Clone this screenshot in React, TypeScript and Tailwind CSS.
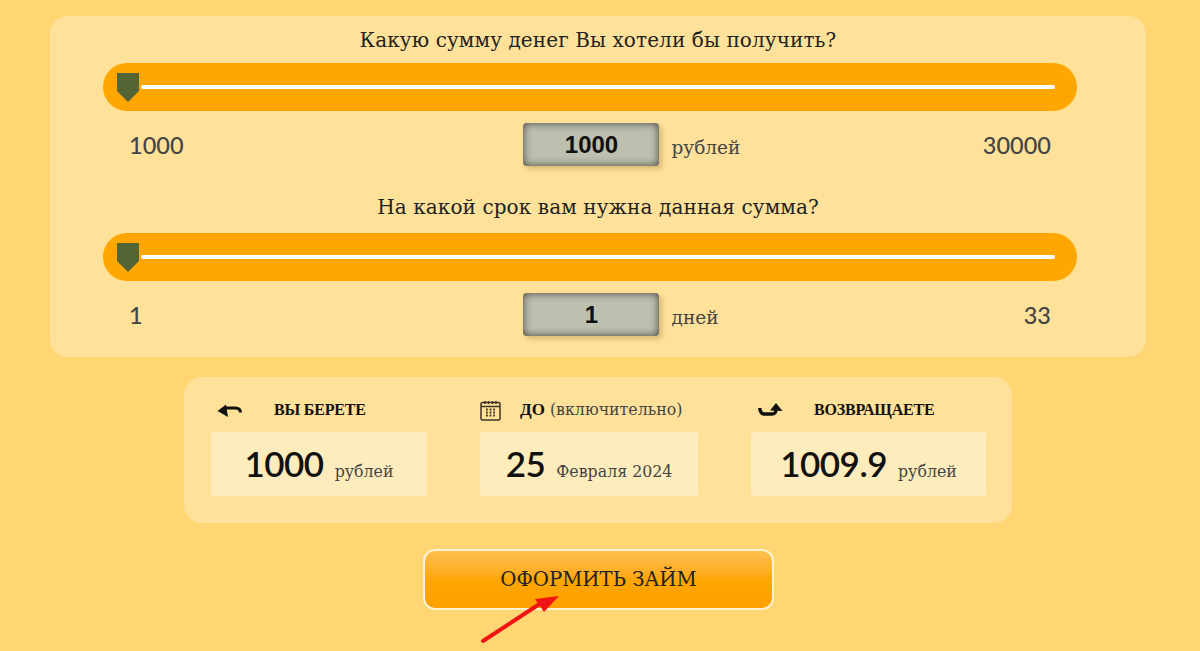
import React from "react";

const serif = "font-['DejaVu_Serif','Liberation_Serif',serif]";
const lato = "font-['Lato','Open_Sans',sans-serif]";

function Slider() {
  return (
    <div className="relative ml-[53px] mr-[69px] flex h-12 items-center rounded-3xl bg-[#ffa600] pl-[38px] pr-[22px]">
      <div className="h-1 w-full rounded-sm bg-white" />
      <svg className="absolute left-[14px] top-[10px]" width="22" height="30" viewBox="0 0 22 30">
        <path d="M0 0H22V18L11 29L0 18Z" fill="#536435" />
      </svg>
    </div>
  );
}

function ValueRow({ min, max, value, unit }: { min: string; max: string; value: string; unit: string }) {
  return (
    <div className="ml-[79px] mr-[95px] flex h-[70px] items-center">
      <span className={`${lato} flex-1 text-[23.5px] font-medium text-[#444]`}>{min}</span>
      <div className="mb-[3px] ml-[1px] flex h-[43px] w-[136px] items-center justify-center rounded-[4px] bg-[#bdbfaf] pl-[2px] font-['Liberation_Sans',sans-serif] text-[24px] font-bold text-[#111] shadow-[inset_0_0_8px_#3f3f30,3px_3px_5px_rgba(120,100,40,0.3)]">
        {value}
      </div>
      <div className="flex flex-1 items-center justify-between">
        <span className={`${serif} ml-[13px] mt-[4px] text-[18.5px] text-[#444]`}>{unit}</span>
        <span className={`${lato} text-[23.5px] font-medium text-[#444]`}>{max}</span>
      </div>
    </div>
  );
}

function Stat({ icon, label, value, unit, box }: { icon: React.ReactNode; label: React.ReactNode; value: string; unit: string; box: string }) {
  return (
    <div className={box}>
      <div className="flex h-[55px] items-center pt-[11px] text-[#111]">
        {icon}
        {label}
      </div>
      <div className="flex h-16 items-baseline justify-center rounded-[3px] bg-[#ffecbd] pt-[5px]">
        <span className={`${lato} text-[35px] font-semibold tracking-[-0.5px] text-[#111]`}>{value}</span>
        <span className={`${serif} ml-[11px] text-[15.8px] text-[#444]`}>{unit}</span>
      </div>
    </div>
  );
}

export default function App() {
  return (
    <div className={`${serif} relative h-[651px] overflow-hidden bg-[#ffd673] pt-4`}>
      <div className="ml-[50px] h-[341px] w-[1096px] rounded-[18px] bg-[#ffe19a]">
        <h2 className="flex h-[47px] items-center justify-center text-[20px] tracking-[0.1px] text-[#222]">Какую сумму денег Вы хотели бы получить?</h2>
        <Slider />
        <ValueRow min="1000" max="30000" value="1000" unit="рублей" />
        <h2 className="flex h-[52px] items-center justify-center text-[20px] tracking-[0.1px] text-[#222]">На какой срок вам нужна данная сумма?</h2>
        <Slider />
        <ValueRow min="1" max="33" value="1" unit="дней" />
      </div>

      <div className="ml-[184px] mt-5 flex h-[146px] w-[828px] rounded-[18px] bg-[#ffe19a] pl-[27px]">
        <Stat
          box="w-[216px]"
          icon={
            <svg className="ml-[6px] mr-[32px]" width="25" height="17" viewBox="0 0 25 17">
              <path d="M0.5 9L9 2.5L11 15Z" fill="#111" />
              <path d="M8 6H18C22 6 23.5 7.5 23.5 10.5" fill="none" stroke="#111" strokeWidth="3" />
            </svg>
          }
          label={<span className="font-['Liberation_Serif',serif] text-[16px] tracking-[-0.2px] font-bold">ВЫ БЕРЕТЕ</span>}
          value="1000"
          unit="рублей"
        />
        <Stat
          box="ml-[53px] w-[218px]"
          icon={
            <svg className="mr-[19px]" width="21" height="21" viewBox="0 0 21 21" fill="none" stroke="#3d3425" strokeWidth="1.5">
              <rect x="1" y="2.5" width="19" height="17.5" rx="1.5" />
              <path d="M1 6.5H20M5 1V4M8.5 1V4M12.5 1V4M16 1V4" />
              <path d="M6 9.5H7.8M9.6 9.5H11.4M13.2 9.5H15M6 12.5H7.8M9.6 12.5H11.4M13.2 12.5H15M6 15.5H7.8M9.6 15.5H11.4M13.2 15.5H15" strokeWidth="2" />
            </svg>
          }
          label={
            <span className="flex items-baseline">
              <span className="font-['Liberation_Serif',serif] text-[17px] font-bold">ДО</span>
              <span className="ml-[5px] text-[15.8px] text-[#444]">(включительно)</span>
            </span>
          }
          value="25"
          unit="Февраля 2024"
        />
        <Stat
          box="ml-[53px] w-[235px]"
          icon={
            <svg className="ml-[7px] mr-[31px]" width="25" height="17" viewBox="0 0 25 17">
              <path d="M18 1L24.5 9L12 8.5Z" fill="#111" />
              <path d="M1.8 6C1.8 10.5 4 12 7 12H14C17 12 18 10.5 18 7" fill="none" stroke="#111" strokeWidth="3.4" />
            </svg>
          }
          label={<span className="font-['Liberation_Serif',serif] text-[16px] tracking-[-0.2px] font-bold">ВОЗВРАЩАЕТЕ</span>}
          value="1009.9"
          unit="рублей"
        />
      </div>

      <button className="ml-[423px] mt-[26px] flex h-[61px] w-[351px] items-center justify-center rounded-[12px] border-2 border-[#fff3d0] bg-gradient-to-b from-[#ffc04d] via-[#ffa600] to-[#ffa000] text-[19.7px] text-[#222]">
        ОФОРМИТЬ ЗАЙМ
      </button>

      <svg className="absolute left-[478px] top-[592px]" width="84" height="54" viewBox="0 0 84 54">
        <path d="M5 49L60 13" stroke="#f01414" strokeWidth="4" strokeLinecap="round" />
        <path d="M81 4L57 7L66 20Z" fill="#f01414" />
      </svg>
    </div>
  );
}
